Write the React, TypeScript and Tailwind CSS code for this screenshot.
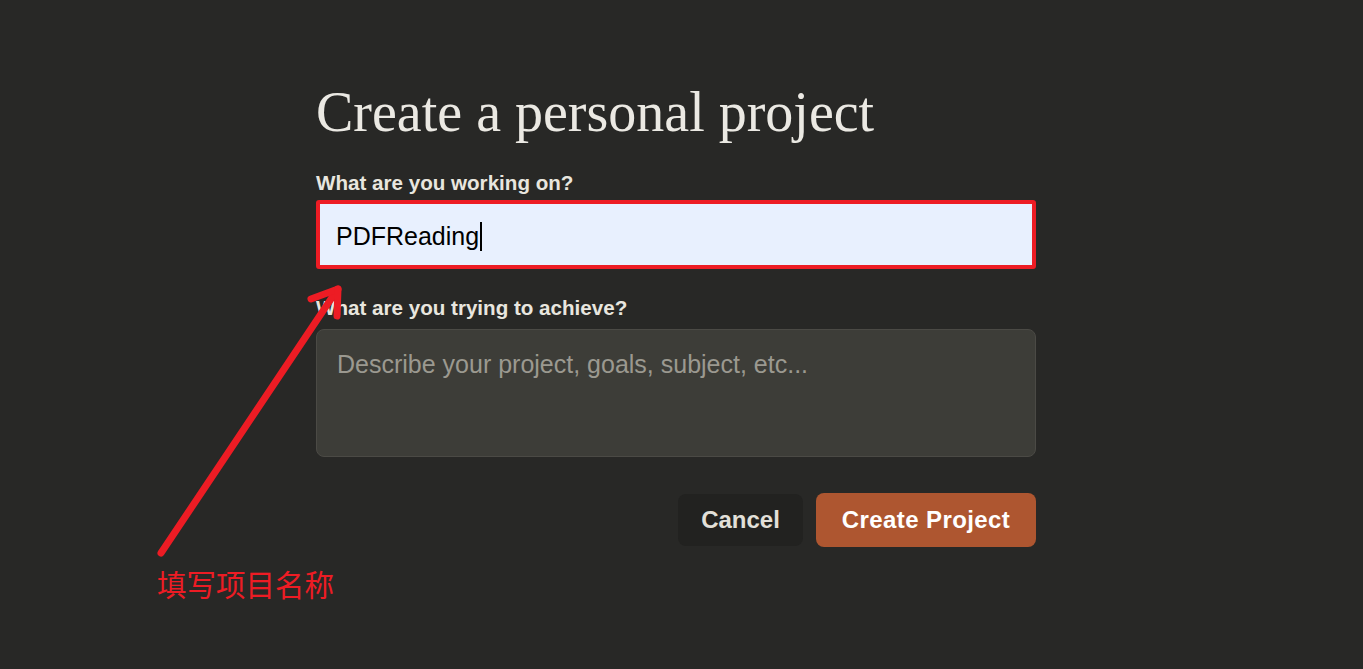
import React, { useState } from "react";

export default function App() {
  const [goal, setGoal] = useState("");

  return (
    <div className="relative min-h-[669px] w-full bg-[#282826] font-['Liberation_Sans',sans-serif]">
      <div className="ml-[316px] w-[720px] pt-[80px]">
        <h1 className="font-['Liberation_Serif',serif] text-[56px] leading-[64px] text-[#ebe9e3]">
          Create a personal project
        </h1>

        <label className="mt-[27px] block text-[20.6px] font-bold leading-[24px] text-[#e8e6df]">
          What are you working on?
        </label>
        <div className="mt-[5px] rounded-[3px] border-4 border-[#ed1c24]">
          <div className="flex h-[61px] items-center bg-[#e8f0fe] px-4 pt-[3px]">
            <span className="text-[25px] leading-[30px] text-black">PDFReading</span>
            <span className="ml-[1px] h-[29px] w-[2px] bg-black" />
          </div>
        </div>

        <label className="mt-[27px] block text-[20.6px] font-bold leading-[24px] text-[#e8e6df]">
          What are you trying to achieve?
        </label>
        <textarea
          value={goal}
          onChange={(e) => setGoal(e.target.value)}
          placeholder="Describe your project, goals, subject, etc..."
          className="mt-[9px] block h-[128px] w-full resize-none rounded-lg border border-[#4b4a45] bg-[#3d3d38] px-5 py-[19px] text-[25px] leading-[30px] text-[#e8e6df] outline-none placeholder:text-[#9b9990]"
        />

        <div className="mt-[36px] flex items-center justify-end gap-[13px]">
          <button className="h-[52px] w-[125px] rounded-lg bg-[#222220] text-[24px] font-bold text-[#e2e0d9]">
            Cancel
          </button>
          <button className="h-[54px] w-[220px] rounded-lg bg-[#ae5630] text-[24px] font-bold tracking-[0.4px] text-white">
            Create Project
          </button>
        </div>
      </div>

      <svg
        className="pointer-events-none absolute left-0 top-0"
        width="1363"
        height="669"
        viewBox="0 0 1363 669"
      >
        <g stroke="#ed1c24" strokeWidth="7" strokeLinecap="round" fill="none">
          <line x1="161" y1="553" x2="337" y2="290" />
          <line x1="311" y1="299" x2="338" y2="289" />
          <line x1="338" y1="289" x2="337" y2="316" />
        </g>
      </svg>
      <div className="absolute left-[157px] top-[565px] font-['Noto_Sans_CJK_SC',sans-serif] text-[29.5px] leading-[36px] text-[#ed1c24]">
        填写项目名称
      </div>
    </div>
  );
}
